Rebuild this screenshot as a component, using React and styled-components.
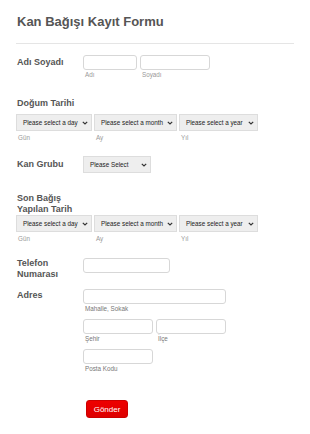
import React from "react";
import styled, { createGlobalStyle } from "styled-components";

const GlobalStyle = createGlobalStyle`
  body {
    margin: 0;
    background: #ffffff;
    font-family: "Liberation Sans", Arial, sans-serif;
  }
`;

const dateParts = [
  { text: "Please select a day", sub: "Gün", w: 76 },
  { text: "Please select a month", sub: "Ay", w: 83 },
  { text: "Please select a year", sub: "Yıl", w: 79 },
];

const Chevron = () => (
  <svg width="6" height="4" viewBox="0 0 6 4">
    <path d="M0.8 0.8 L3 3 L5.2 0.8" fill="none" stroke="#333" strokeWidth="1.2" />
  </svg>
);

const DateRow = () => (
  <Dates>
    {dateParts.map((p) => (
      <Col key={p.sub}>
        <Select $w={p.w}>
          <span>{p.text}</span>
          <Chevron />
        </Select>
        <Sub $top={3}>{p.sub}</Sub>
      </Col>
    ))}
  </Dates>
);

const App = () => {
  return (
    <Page>
      <GlobalStyle />
      <Title>Kan Bağışı Kayıt Formu</Title>
      <Line />

      <Row $mt={0}>
        <Label $pt={2}>Adı Soyadı</Label>
        <Inputs>
          <Col>
            <Input $w={54} />
            <Sub>Adı</Sub>
          </Col>
          <Col>
            <Input $w={70} />
            <Sub>Soyadı</Sub>
          </Col>
        </Inputs>
      </Row>

      <Block $mt={20}>
        <BlockLabel $mb={5}>Doğum Tarihi</BlockLabel>
        <DateRow />
      </Block>

      <Row $mt={15}>
        <Label $pt={3}>Kan Grubu</Label>
        <Select $w={68}>
          <span>Please Select</span>
          <Chevron />
        </Select>
      </Row>

      <Block $mt={20}>
        <BlockLabel $mb={0}>
          Son Bağış
          <br />
          Yapılan Tarih
        </BlockLabel>
        <DateRow />
      </Block>

      <Row $mt={16}>
        <Label>
          Telefon
          <br />
          Numarası
        </Label>
        <Input $w={87} />
      </Row>

      <Row $mt={9}>
        <Label $pt={1}>Adres</Label>
        <Address>
          <Col>
            <Input $w={143} />
            <Sub $dark>Mahalle, Sokak</Sub>
          </Col>
          <Inputs>
            <Col>
              <Input $w={70} />
              <Sub $dark>Şehir</Sub>
            </Col>
            <Col>
              <Input $w={70} />
              <Sub $dark>İlçe</Sub>
            </Col>
          </Inputs>
          <Col>
            <Input $w={70} />
            <Sub $dark>Posta Kodu</Sub>
          </Col>
        </Address>
      </Row>

      <Submit type="button">Gönder</Submit>
    </Page>
  );
};

export default App;

const Page = styled.div`
  width: 310px;
  padding: 14px 16px 10px 16px;
  box-sizing: border-box;
  color: #555;
`;

const Title = styled.h1`
  margin: 0 0 0 1px;
  font-size: 13px;
  font-weight: bold;
  color: #555;
  line-height: 16px;
`;

const Line = styled.div`
  height: 1px;
  background-color: #e5e5e5;
  margin: 13px 0 11px 0;
`;

const Row = styled.div`
  display: flex;
  align-items: flex-start;
  margin-top: ${(p) => p.$mt}px;
`;

const Block = styled.div`
  display: flex;
  flex-direction: column;
  margin-top: ${(p) => p.$mt}px;
`;

const Label = styled.div`
  width: 67px;
  box-sizing: border-box;
  flex-shrink: 0;
  padding: ${(p) => p.$pt || 0}px 0 0 1px;
  font-size: 9px;
  font-weight: bold;
  line-height: 11px;
  color: #555;
`;

const BlockLabel = styled(Label)`
  width: auto;
  margin-bottom: ${(p) => p.$mb}px;
`;

const Inputs = styled.div`
  display: flex;
  gap: 3px;
`;

const Address = styled.div`
  display: flex;
  flex-direction: column;
  gap: 7px;
`;

const Col = styled.div`
  display: flex;
  flex-direction: column;
`;

const Input = styled.div`
  width: ${(p) => p.$w}px;
  height: 15px;
  box-sizing: border-box;
  border: 1px solid #d7d7d7;
  border-radius: 3px;
  background: #fff;
`;

const Sub = styled.div`
  margin-top: ${(p) => p.$top || 1}px;
  padding-left: 2px;
  font-size: 6.3px;
  line-height: 7px;
  color: ${(p) => (p.$dark ? "#777" : "#999")};
`;

const Dates = styled.div`
  display: flex;
  gap: 2px;
`;

const Select = styled.div`
  width: ${(p) => p.$w}px;
  height: 17px;
  box-sizing: border-box;
  display: flex;
  align-items: center;
  gap: 3px;
  padding: 0 3px 0 6px;
  border: 1px solid #ddd;
  background: #eee;
  font-size: 6.3px;
  color: #222;
  white-space: nowrap;

  svg {
    margin-left: auto;
    flex-shrink: 0;
  }
`;

const Submit = styled.button`
  display: block;
  margin: 28px 0 0 70px;
  width: 42px;
  height: 18px;
  padding: 0;
  border: 1px solid #c00;
  border-radius: 3px;
  background: linear-gradient(#e00, #d00);
  color: #fff;
  font-family: "Liberation Sans", Arial, sans-serif;
  font-size: 8px;
`;
